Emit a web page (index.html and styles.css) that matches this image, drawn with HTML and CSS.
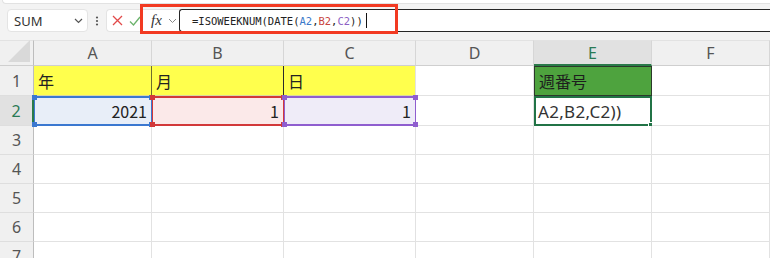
FILE: index.html
```html
<!DOCTYPE html>
<html lang="ja">
<head>
  <meta charset="UTF-8" />
  <title>ISOWEEKNUM</title>
  <link rel="stylesheet" href="styles.css">
</head>
<body>
  <!-- formula bar -->
  <div class="toolbar">
    <div class="ribbon-edge"></div>
    <div class="formula-row">
      <div class="name-box">
        <span>SUM</span>
        <svg width="9" height="6" viewBox="0 0 9 6"><path d="M1 1l3.5 3.5L8 1" fill="none" stroke="#555" stroke-width="1.2"/></svg>
      </div>
      <div class="more">
        <svg width="4" height="10" viewBox="0 0 4 10"><circle cx="2" cy="1.5" r="1.1" fill="#555"/><circle cx="2" cy="5" r="1.1" fill="#555"/><circle cx="2" cy="8.5" r="1.1" fill="#555"/></svg>
      </div>
      <div class="fx-group">
        <svg class="ico-cancel" width="11" height="11" viewBox="0 0 11 11"><path d="M1 1l9 9M10 1l-9 9" stroke="#e24a4a" stroke-width="1.3"/></svg>
        <svg class="ico-enter" width="12" height="10" viewBox="0 0 12 10"><path d="M1 5.5l3.5 3.5L11 1" fill="none" stroke="#6cb36c" stroke-width="1.3"/></svg>
        <span class="fx">fx</span>
        <svg class="ico-chev" width="9" height="6" viewBox="0 0 9 6"><path d="M1 1l3.5 3.5L8 1" fill="none" stroke="#888" stroke-width="1"/></svg>
      </div>
      <div class="formula-input">
        <span>=ISOWEEKNUM(DATE(</span><span class="ref-a">A2</span><span>,</span><span class="ref-b">B2</span><span>,</span><span class="ref-c">C2</span><span>))</span><span class="caret"></span>
      </div>
    </div>
  </div>

  <!-- annotation -->
  <div class="highlight"></div>

  <!-- sheet -->
  <div class="sheet">
    <div class="corner">
      <svg width="24" height="24" viewBox="0 0 24 24"><path d="M23 1V23H1Z" fill="#d9d9d9"/></svg>
    </div>
    <div class="col-head">A</div>
    <div class="col-head">B</div>
    <div class="col-head">C</div>
    <div class="col-head">D</div>
    <div class="col-head active">E</div>
    <div class="col-head">F</div>

    <div class="row-head">1</div>
    <div class="cell yellow line-olive">年</div>
    <div class="cell yellow line-dark">月</div>
    <div class="cell yellow">日</div>
    <div class="cell"></div>
    <div class="cell green">週番号</div>
    <div class="cell"></div>

    <div class="row-head active">2</div>
    <div class="cell num range range-blue">2021<i class="h tl"></i><i class="h bl"></i><i class="h tr"></i><i class="h br"></i></div>
    <div class="cell num range range-red">1<i class="h tl"></i><i class="h bl"></i><i class="h tr"></i><i class="h br"></i></div>
    <div class="cell num range range-purple">1<i class="h tl"></i><i class="h bl"></i><i class="h tr"></i><i class="h br"></i></div>
    <div class="cell"></div>
    <div class="cell editing">A2,B2,C2))<i class="fill-handle"></i></div>
    <div class="cell"></div>

    <div class="row-head">3</div>
    <div class="cell"></div><div class="cell"></div><div class="cell"></div><div class="cell"></div><div class="cell"></div><div class="cell"></div>
    <div class="row-head">4</div>
    <div class="cell"></div><div class="cell"></div><div class="cell"></div><div class="cell"></div><div class="cell"></div><div class="cell"></div>
    <div class="row-head">5</div>
    <div class="cell"></div><div class="cell"></div><div class="cell"></div><div class="cell"></div><div class="cell"></div><div class="cell"></div>
    <div class="row-head">6</div>
    <div class="cell"></div><div class="cell"></div><div class="cell"></div><div class="cell"></div><div class="cell"></div><div class="cell"></div>
    <div class="row-head">7</div>
    <div class="cell"></div><div class="cell"></div><div class="cell"></div><div class="cell"></div><div class="cell"></div><div class="cell"></div>
  </div>
</body>
</html>
```

FILE: styles.css
```css
* {
  margin: 0;
  padding: 0;
  box-sizing: border-box;
}

body {
  position: relative;
  width: 770px;
  height: 258px;
  overflow: hidden;
  background-color: #fff;
  font-family: "Noto Sans", "Noto Sans CJK JP", sans-serif;
}

/* Formula bar */
.toolbar {
  height: 40px;
  background-color: #f3f3f3;
}

.ribbon-edge {
  height: 4px;
  margin-left: 2px;
  background-color: #fff;
  border-bottom: 1px solid #e2e2e2;
  border-left: 1px solid #e2e2e2;
  border-radius: 0 0 0 5px;
}

.formula-row {
  display: flex;
  height: 23px;
  margin-top: 5px;
}

.name-box {
  width: 81px;
  margin-left: 7px;
  display: flex;
  align-items: center;
  justify-content: space-between;
  padding: 0 4px 0 6px;
  background-color: #fff;
  border: 1px solid #e4e4e4;
  border-radius: 4px;
  font-size: 13px;
  color: #333;
}

.name-box span {
  padding-top: 1px;
}

.more {
  width: 18px;
  display: flex;
  align-items: center;
  justify-content: center;
}

.fx-group {
  width: 73px;
  display: flex;
  align-items: center;
  background-color: #fff;
  border: 1px solid #e4e4e4;
  border-right: none;
  border-radius: 4px 0 0 4px;
}

.ico-cancel {
  margin-left: 5px;
}

.ico-enter {
  margin-left: 6px;
}

.fx {
  margin-left: 10px;
  font-family: "Liberation Serif", serif;
  font-style: italic;
  font-size: 15px;
  color: #333;
  line-height: 1;
}

.ico-chev {
  margin-left: 6px;
}

.formula-input {
  flex: 1;
  display: flex;
  align-items: center;
  padding-left: 12px;
  background-color: #fff;
  border: 1px solid #262626;
  border-right: none;
  border-radius: 3px 0 0 3px;
  font-family: "DejaVu Sans Mono", monospace;
  font-size: 10.5px;
  color: #222;
  white-space: pre;
}

.ref-a { color: #3b78c9; }
.ref-b { color: #c8453e; }
.ref-c { color: #8c5fc4; }

.caret {
  width: 1px;
  height: 15px;
  margin-left: 3px;
  background-color: #111;
}

/* red annotation box */
.highlight {
  position: absolute;
  left: 140px;
  top: 4px;
  width: 258px;
  height: 30px;
  border: 3px solid #f23a22;
}

/* Sheet grid */
.sheet {
  display: grid;
  grid-template-columns: 34px 118px 132px 132px 118px 118px 118px;
  grid-template-rows: 26px 30px 30px 29px 29px 29px 29px 29px;
}

.corner {
  display: flex;
  align-items: flex-end;
  justify-content: flex-end;
  padding: 0 2px 2px 0;
  background-color: #f0f0f0;
  border-top: 1px solid #e2e2e2;
  border-right: 1px solid #bdbdbd;
  border-bottom: 1px solid #cfcfcf;
}

.col-head {
  display: flex;
  align-items: center;
  justify-content: center;
  background-color: #f0f0f0;
  border-top: 1px solid #e2e2e2;
  border-right: 1px solid #d6d6d6;
  border-bottom: 1px solid #cfcfcf;
  font-size: 16px;
  color: #555;
}

.col-head.active {
  background-color: #e1e1e1;
  color: #2a7a55;
  border-bottom: 2px solid #2a7a4a;
}

.row-head {
  display: flex;
  align-items: center;
  justify-content: center;
  background-color: #f0f0f0;
  border-right: 1px solid #bdbdbd;
  border-bottom: 1px solid #dedede;
  font-size: 16px;
  color: #555;
}

.row-head.active {
  background-color: #e1e1e1;
  color: #2a7a55;
  border-right: 2px solid #2a7a4a;
}

.cell {
  position: relative;
  display: flex;
  align-items: center;
  padding: 0 4px;
  border-right: 1px solid #e2e2e2;
  border-bottom: 1px solid #e2e2e2;
  font-family: "Noto Sans CJK JP", "Noto Sans", sans-serif;
  font-size: 16px;
  color: #222;
  white-space: nowrap;
}

.yellow {
  background-color: #ffff4d;
  border-bottom-color: #d8d8a0;
}

.line-olive {
  border-right-color: #6e6e2e;
}

.line-dark {
  border-right-color: #2a2a2a;
}

.green {
  background-color: #4ea33e;
  border: 1px solid #2b3a2b;
  color: #1d1d1d;
}

.num {
  justify-content: flex-end;
}

.range {
  border-width: 2px 1px;
  border-style: solid;
}

.range-blue {
  background-color: #e8eef8;
  border-color: #3b78d0;
}

.range-red {
  background-color: #fbe9e9;
  border-color: #d2393a;
}

.range-purple {
  background-color: #efecf8;
  border-color: #8f5ecf;
}

/* range corner handles */
.h {
  position: absolute;
  width: 5px;
  height: 5px;
  z-index: 2;
}

.range-blue .h { background-color: #3b78d0; }
.range-red .h { background-color: #d2393a; }
.range-purple .h { background-color: #8f5ecf; }

.tl { left: -3px; top: -3px; }
.tr { right: -3px; top: -3px; }
.bl { left: -3px; bottom: -3px; }
.br { right: -3px; bottom: -3px; }

.editing {
  border: 2px solid #217346;
  padding-left: 2px;
  font-family: "Noto Sans", "Noto Sans CJK JP", sans-serif;
  font-size: 17px;
  letter-spacing: 0.3px;
  color: #333;
}

.fill-handle {
  position: absolute;
  right: -3px;
  bottom: -3px;
  width: 5px;
  height: 5px;
  background-color: #217346;
  border: 1px solid #fff;
}
```
